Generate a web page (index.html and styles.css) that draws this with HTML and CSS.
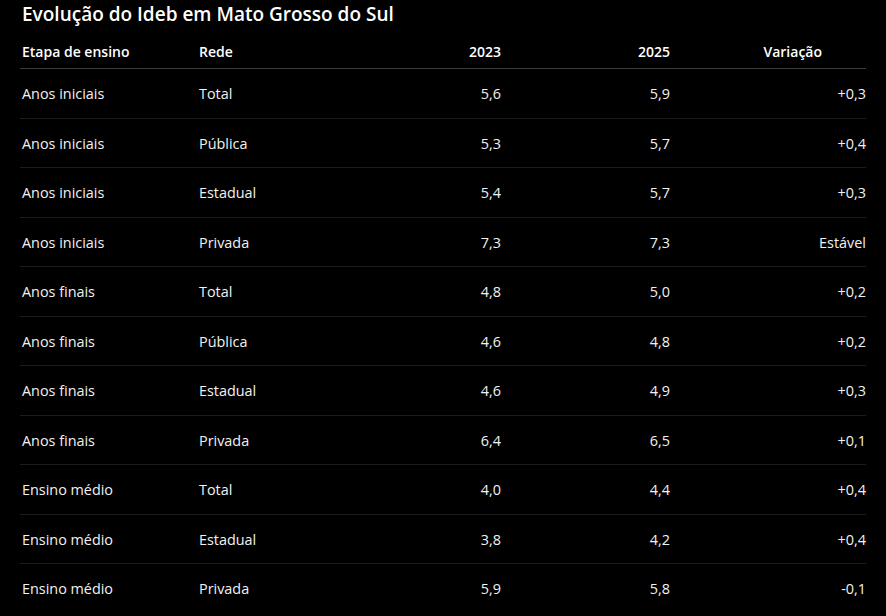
FILE: index.html
```html
<!DOCTYPE html>
<html lang="pt-BR">
<head>
<meta charset="utf-8">
<title>Evolução do Ideb em Mato Grosso do Sul</title>
<link rel="stylesheet" href="styles.css">
</head>
<body>
<main class="page">
  <h2 class="title">Evolução do Ideb em Mato Grosso do Sul</h2>
  <table class="ideb">
    <colgroup>
      <col class="c1"><col class="c2"><col class="c3"><col class="c4"><col class="c5">
    </colgroup>
    <thead>
      <tr>
        <th class="left">Etapa de ensino</th>
        <th class="left">Rede</th>
        <th class="num">2023</th>
        <th class="num">2025</th>
        <th class="num var-head">Variação</th>
      </tr>
    </thead>
    <tbody>
      <tr><td>Anos iniciais</td><td>Total</td><td class="num">5,6</td><td class="num">5,9</td><td class="num">+0,3</td></tr>
      <tr><td>Anos iniciais</td><td>Pública</td><td class="num">5,3</td><td class="num">5,7</td><td class="num">+0,4</td></tr>
      <tr><td>Anos iniciais</td><td>Estadual</td><td class="num">5,4</td><td class="num">5,7</td><td class="num">+0,3</td></tr>
      <tr><td>Anos iniciais</td><td>Privada</td><td class="num">7,3</td><td class="num">7,3</td><td class="num">Estável</td></tr>
      <tr><td>Anos finais</td><td>Total</td><td class="num">4,8</td><td class="num">5,0</td><td class="num">+0,2</td></tr>
      <tr><td>Anos finais</td><td>Pública</td><td class="num">4,6</td><td class="num">4,8</td><td class="num">+0,2</td></tr>
      <tr><td>Anos finais</td><td>Estadual</td><td class="num">4,6</td><td class="num">4,9</td><td class="num">+0,3</td></tr>
      <tr><td>Anos finais</td><td>Privada</td><td class="num">6,4</td><td class="num">6,5</td><td class="num">+0,1</td></tr>
      <tr><td>Ensino médio</td><td>Total</td><td class="num">4,0</td><td class="num">4,4</td><td class="num">+0,4</td></tr>
      <tr><td>Ensino médio</td><td>Estadual</td><td class="num">3,8</td><td class="num">4,2</td><td class="num">+0,4</td></tr>
      <tr><td>Ensino médio</td><td>Privada</td><td class="num">5,9</td><td class="num">5,8</td><td class="num">-0,1</td></tr>
    </tbody>
  </table>
</main>
</body>
</html>
```

FILE: styles.css
```css
html, body {
  margin: 0;
  padding: 0;
  background: #000;
}
body {
  color: #f2f2f2;
  font-family: "Open Sans", "Noto Sans", "Liberation Sans", sans-serif;
  font-size: 14.4px;
}
.page {
  padding: 0 20px;
}
.title {
  margin: 0 0 8px 2px;
  font-size: 19px;
  font-weight: 600;
  line-height: 28px;
  color: #fff;
}
.ideb {
  width: 846px;
  border-collapse: collapse;
  table-layout: fixed;
}
.c1 { width: 177px; }
.c2 { width: 150px; }
.c3 { width: 154px; }
.c4 { width: 169px; }
.c5 { width: 196px; }
.ideb th {
  font-weight: 600;
  font-size: 14px;
  color: #fff;
  height: 32px;
  padding: 0;
  line-height: 20px;
  border-bottom: 1px solid #3c3c3c;
}
.ideb td {
  height: 46.5px;
  padding: 2px 0 0;
  line-height: 20px;
  border-bottom: 1px solid #1c1c1c;
}
.ideb tbody tr:last-child td {
  border-bottom: none;
}
.ideb .left, .ideb td {
  text-align: left;
  padding-left: 2px;
}
.ideb .num {
  text-align: right;
  padding-left: 0;
  padding-right: 0;
}
.ideb .var-head {
  padding-right: 44px;
}
```
